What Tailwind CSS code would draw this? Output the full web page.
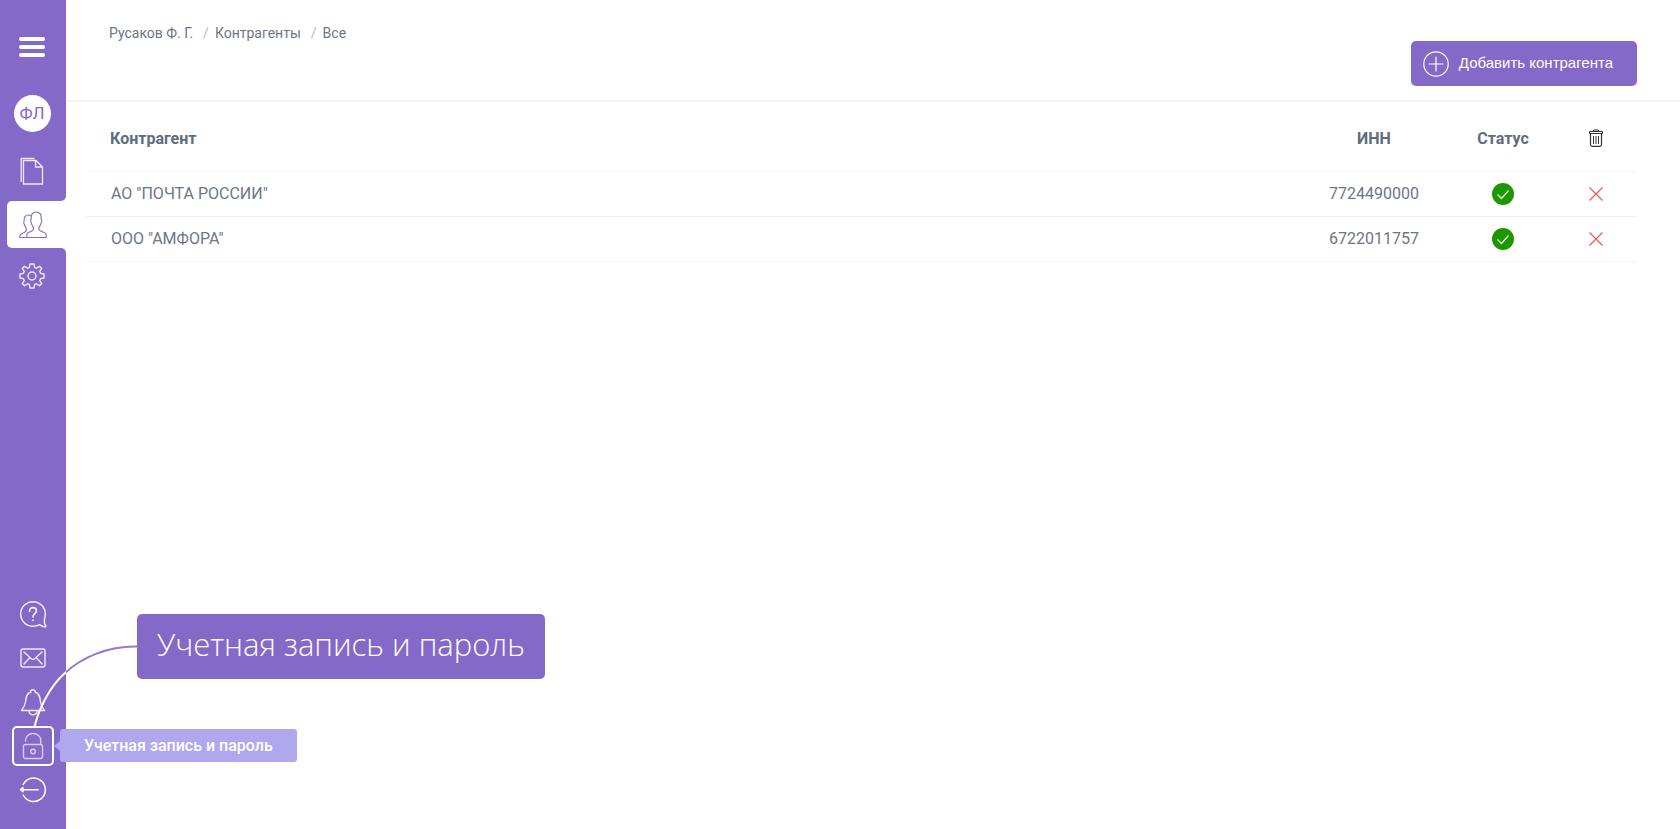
<!DOCTYPE html>
<html lang="ru">
<head>
  <meta charset="UTF-8">
  <meta name="viewport" content="width=device-width, initial-scale=1.0">
  <title>Контрагенты</title>
  <script src="https://cdn.jsdelivr.net/npm/@tailwindcss/browser@4"></script>
</head>
<body class="relative flex min-h-screen bg-white font-['Roboto',sans-serif] text-[#6b7688]">
  <!-- Sidebar -->
  <aside class="flex w-[66px] shrink-0 flex-col text-white">
    <div class="flex flex-col items-center rounded-br-[5px] bg-[#8569c9] pt-[37px] pr-0.5 pb-4">
      <button type="button" aria-label="Меню" class="flex w-[26px] flex-col gap-1">
        <span class="h-1 w-full rounded-full bg-white"></span>
        <span class="h-1 w-full rounded-full bg-white"></span>
        <span class="h-1 w-full rounded-full bg-white"></span>
      </button>
      <a href="#" class="mt-[38px] flex size-[37px] items-center justify-center rounded-full bg-white text-[17px] text-[#8569c9]">ФЛ</a>
      <a href="#" aria-label="Документы" class="mt-[25px]">
        <svg class="h-7 w-[26px]" viewBox="0 0 26 28" fill="none" stroke="#f1e9fb" stroke-width="1.3">
          <path d="M4.500 25.500V3.500H17L23.500 10V27H4.500V25M16.500 3.500V10H23.500"/>
          <path d="M2.200 25V1.500H15.500"/>
        </svg>
      </a>
    </div>
    <div class="bg-[#8569c9] pl-[7px]">
      <a href="#" aria-label="Контрагенты" aria-current="page" class="flex h-[47px] items-center rounded-l-[5px] bg-white pl-3">
        <svg class="h-7 w-7" viewBox="0 0 28 28" fill="none" stroke="#8569c9" stroke-width="1.1" stroke-linejoin="round">
          <path d="M7.800 26.500V24.500C7.800 22.300 9 21.500 10.500 21C13.300 20.100 14.600 19.300 14.600 17.500C14.600 15.800 12.700 14.800 12.400 12C11.600 11.500 11.400 9 12.100 8.500C11.600 3.500 13.600 1 17.200 1C20.800 1 22.800 3.500 22.300 8.500C23 9 22.800 11.500 22 12C21.700 14.800 19.800 15.800 19.800 17.500C19.800 19.300 21.100 20.100 23.900 21C26 21.700 27.300 22.700 27.300 25V26.500Z"/>
          <path d="M11.800 5C11.200 4.300 10.300 4 9.500 4C6.300 4 4.600 6.200 5.100 10.300C4.500 10.800 4.700 13 5.400 13.400C5.700 15.700 7.400 16.700 7.400 18.500C7.400 20.300 6.400 21.200 4 22C1.900 22.700 0.900 23.500 0.900 25.300V26.500H7.800"/>
        </svg>
      </a>
    </div>
    <div class="flex flex-1 flex-col items-center rounded-tr-[5px] bg-[#8569c9] pt-[14px] pb-[17px]">
      <a href="#" aria-label="Настройки" class="pr-0.5">
        <svg class="size-7" viewBox="0 0 28 28" fill="none" stroke="#f1e9fb" stroke-width="1.4" stroke-linejoin="round">
          <path d="M12 2H16L16.600 5.400L18.700 6.300L21.500 4.300L23.700 6.500L21.700 9.300L22.600 11.400L26 12V16L22.600 16.600L21.700 18.700L23.700 21.500L21.500 23.700L18.700 21.700L16.600 22.600L16 26H12L11.400 22.600L9.300 21.700L6.500 23.700L4.300 21.500L6.300 18.700L5.400 16.600L2 16V12L5.400 11.400L6.300 9.300L4.300 6.500L6.500 4.300L9.300 6.300L11.400 5.400Z"/>
          <circle cx="14" cy="14" r="4"/>
        </svg>
      </a>
      <nav class="mt-auto flex w-full flex-col">
        <a href="#" aria-label="Помощь" class="flex h-11 items-center justify-center">
          <svg class="size-7" viewBox="0 0 28 28" fill="none" stroke="#f7f2fd" stroke-width="1.4" stroke-linejoin="round" stroke-linecap="round">
            <path d="M25.500 19C26 17.300 26.300 15.800 26.300 14A12.300 12.300 0 1 0 14 26.300C17 26.300 18.700 25.600 20.500 24.600C22.500 26.200 24.500 27 26.700 26.700C27.100 26.600 27.100 26 26.800 25.700C25.300 24 25 22 25.500 19Z"/>
            <path stroke-width="1.700" d="M10.500 11.200C10.500 8.800 11.900 7.600 13.900 7.600C15.900 7.600 17.400 8.900 17.400 10.800C17.400 13.600 14 13.600 14 16.800M14 20V20.200"/>
          </svg>
        </a>
        <a href="#" aria-label="Почта" class="flex h-11 items-center justify-center">
          <svg class="h-5 w-[26px]" viewBox="0 0 26 20" fill="none" stroke="#f1e9fb" stroke-width="1.400" stroke-linejoin="round" stroke-linecap="round">
            <rect x="1" y="1" width="24" height="18" rx="2"/>
            <path d="M4 4L11 10.500C12.300 11.700 13.700 11.700 15 10.500L22 4M4 16L9.500 10M22 16L16.500 10"/>
          </svg>
        </a>
        <a href="#" aria-label="Уведомления" class="flex h-11 items-center justify-center">
          <svg class="h-7 w-[26px]" viewBox="0 0 26 28" fill="none" stroke="#f1e9fb" stroke-width="1.400" stroke-linejoin="round" stroke-linecap="round">
            <path d="M10.700 4.200C6.200 5.300 6 10 5.500 14C5 18 3.500 20 1.500 22.500H24.500C22.500 20 21 18 20.500 14C20 10 19.800 5.300 15.300 4.200"/>
            <path d="M10.500 4.300A2.500 2.500 0 1 1 15.500 4.300M9 23C9.200 25.600 11 26.800 13 26.800S16.800 25.600 17 23"/>
          </svg>
        </a>
        <a href="#" aria-label="Учетная запись и пароль" class="relative flex h-11 items-center justify-center">
          <span class="flex h-10 w-[42px] items-center justify-center rounded-[5px] border-2 border-white">
            <svg class="h-7 w-[22px]" viewBox="0 0 22 28" fill="none" stroke="#d8cbf4" stroke-width="1.400" stroke-linecap="round">
              <rect x="1.500" y="12.500" width="19" height="14" rx="2"/>
              <path d="M3.500 9V8.500C3.500 4.300 6.800 1.500 11 1.500S18.800 4.500 18.800 8.500V12.500"/>
              <circle cx="11" cy="19.500" r="2.300"/>
            </svg>
          </span>
          <!-- tooltip -->
          <span class="absolute top-[5px] left-[54px] flex items-center">
            <svg class="h-2.5 w-1.5" viewBox="0 0 6 10" fill="#b0a8ef"><path d="M0 5L6 0V10Z"/></svg>
            <span class="rounded-[3px] bg-[#b0a8ef] px-6 py-1 text-base leading-[25px] font-medium whitespace-nowrap">Учетная запись и пароль</span>
          </span>
        </a>
        <a href="#" aria-label="Выход" class="flex h-11 items-center justify-center">
          <svg class="size-7" viewBox="0 0 28 28" fill="none" stroke="#fff" stroke-width="1.500" stroke-linecap="round">
            <path d="M4.200 8.500A11.700 11.700 0 1 1 4.200 19M3 13.700H19"/>
            <path d="M1.500 13.700L4 11.700V15.700Z" fill="#fff" stroke-linejoin="round"/>
          </svg>
        </a>
      </nav>
    </div>
  </aside>

  <!-- Content -->
  <main class="min-w-0 flex-1">
    <header class="flex h-[102px] justify-between border-b-2 border-[#f2f3f4] px-[43px]">
      <nav class="flex gap-1.5 pt-[23px] text-sm leading-5">
        <a href="#">Русаков Ф. Г.</a>
        <span class="pl-1 text-[#b5bac3]">/</span>
        <a href="#">Контрагенты</a>
        <span class="pl-1 text-[#b5bac3]">/</span>
        <a href="#">Все</a>
      </nav>
      <button type="button" class="mt-[41px] flex h-[45px] items-center gap-2.5 rounded-[5px] bg-[#8569c9] pr-6 pl-3 font-['Liberation_Sans',sans-serif] text-[15px] text-white">
        <svg class="size-[26px]" viewBox="0 0 26 26" fill="none" stroke="#fff" stroke-width="1.200" stroke-linecap="round">
          <circle cx="13" cy="13" r="12.200"/>
          <path d="M13 6V20M6 13H20"/>
        </svg>
        Добавить контрагента
      </button>
    </header>

    <div class="pr-[43px] pl-5">
      <table class="w-full table-fixed text-base leading-6">
        <thead>
          <tr class="h-[69px] border-b border-[#f6f7f8] text-[#5f6b80]">
            <th class="px-6 pt-1.5 text-left font-bold">Контрагент</th>
            <th class="w-[154px] pt-1.5 font-bold">ИНН</th>
            <th class="w-[104px] pt-1.5 font-bold">Статус</th>
            <th class="w-[82px] pt-1">
              <svg class="mx-auto h-[18px] w-4" role="img" aria-label="Удалить" viewBox="0 0 16 18" fill="none" stroke="#333" stroke-width="1.200">
                <path d="M5 2.500C5 1.300 5.500 1 6.500 1H9.500C10.500 1 11 1.300 11 2.500"/>
                <rect x="1.500" y="2.500" width="13" height="2" rx="0.800"/>
                <path d="M2.500 4.500V15.500C2.500 16.800 3 17.300 4.200 17.300H11.800C13 17.300 13.500 16.800 13.500 15.500V4.500"/>
                <path stroke-width="1" d="M5.500 7V15M8 7V15M10.500 7V15"/>
              </svg>
            </th>
          </tr>
        </thead>
        <tbody>
          <tr class="h-[45px] border-b border-[#eff0f2]">
            <td class="px-[25px]">АО "ПОЧТА РОССИИ"</td>
            <td class="text-center">7724490000</td>
            <td>
              <svg class="mx-auto size-[22px]" role="img" aria-label="Активен" viewBox="0 0 22 22" fill="none">
                <circle cx="11" cy="11" r="11" fill="#1e9600"/>
                <path d="M5.500 11.500L9.500 15.500L16.500 7.500" stroke="#e4f6df" stroke-width="1.200"/>
              </svg>
            </td>
            <td>
              <button type="button" aria-label="Удалить" class="mx-auto block">
                <svg class="size-4" viewBox="0 0 16 16" stroke="#ee5a5a" stroke-width="1.300"><path d="M1.500 1.500L14.500 14.500M14.500 1.500L1.500 14.500"/></svg>
              </button>
            </td>
          </tr>
          <tr class="h-[45px] border-b border-[#f4f5f6]">
            <td class="px-[25px]">ООО "АМФОРА"</td>
            <td class="text-center">6722011757</td>
            <td>
              <svg class="mx-auto size-[22px]" role="img" aria-label="Активен" viewBox="0 0 22 22" fill="none">
                <circle cx="11" cy="11" r="11" fill="#1e9600"/>
                <path d="M5.500 11.500L9.500 15.500L16.500 7.500" stroke="#e4f6df" stroke-width="1.200"/>
              </svg>
            </td>
            <td>
              <button type="button" aria-label="Удалить" class="mx-auto block">
                <svg class="size-4" viewBox="0 0 16 16" stroke="#ee5a5a" stroke-width="1.300"><path d="M1.500 1.500L14.500 14.500M14.500 1.500L1.500 14.500"/></svg>
              </button>
            </td>
          </tr>
        </tbody>
      </table>
    </div>
  </main>

  <!-- Callout with its connector to the lock icon -->
  <div class="pointer-events-none absolute bottom-[102px] left-8 flex items-start">
    <svg class="mt-[31px] h-[82px] w-[105px] shrink-0" viewBox="0 0 105 82" fill="none">
      <defs>
        <linearGradient id="line" gradientUnits="userSpaceOnUse" x1="33" y1="0" x2="35" y2="0">
          <stop offset="0.500" stop-color="#fff"/>
          <stop offset="0.500" stop-color="#9378d2"/>
        </linearGradient>
      </defs>
      <path d="M2.500 82C6 66 17 42 33 28C50 12 76 1 105 1.500" stroke="url(#line)" stroke-width="2"/>
    </svg>
    <p class="rounded-[5px] bg-[#8569c9] px-5 pt-2 pb-3 font-['Open_Sans',sans-serif] text-[31px] leading-[45px] font-light whitespace-nowrap text-white">Учетная запись и пароль</p>
  </div>
</body>
</html>
